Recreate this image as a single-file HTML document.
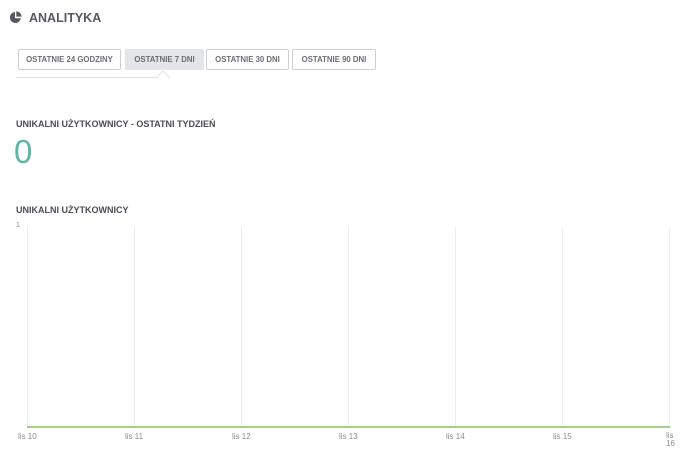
<!DOCTYPE html>
<html><head><meta charset="utf-8"><style>
body{margin:0;width:696px;height:455px;background:#fff;font-family:"Liberation Sans",sans-serif;position:relative;overflow:hidden;color:#4a4d55}
.a{position:absolute}
.tab{position:absolute;top:49px;height:19px;border:1px solid #cfcfd2;border-radius:2px;background:#fff;font-size:7.8px;font-weight:bold;color:#6b6e74;line-height:19px;text-align:center;box-sizing:content-box}
.vl{position:absolute;top:227px;width:1px;height:200px;background:#ececec}
.xl{position:absolute;top:432px;font-size:8px;color:#8a8d92}
</style></head><body>
<svg class="a" style="left:9px;top:11px" width="13" height="13" viewBox="0 0 13 13"><path d="M6 1A5.5 5.5 0 1 0 11.8 7.2H6Z" fill="#555860"/><path d="M7.3 0.2A5.5 5.5 0 0 1 12.6 5.6H7.3Z" fill="#555860"/></svg>
<div class="a" style="left:29px;top:11px;font-size:12.5px;font-weight:bold;color:#555860">ANALITYKA</div>
<div class="tab" style="left:18px;width:101px">OSTATNIE 24 GODZINY</div>
<div class="tab" style="left:125px;width:77px;background:#e4e5e8;border-color:#e4e5e8">OSTATNIE 7 DNI</div>
<div class="tab" style="left:206px;width:81px">OSTATNIE 30 DNI</div>
<div class="tab" style="left:292px;width:82px">OSTATNIE 90 DNI</div>
<div class="a" style="left:16px;top:77px;width:141px;height:1px;background:#e2e2e2"></div>
<svg class="a" style="left:155px;top:70px" width="16" height="9"><path d="M1 8L8 1L15 8" fill="#fff" stroke="#e2e2e2"/></svg>
<div class="a" style="left:16px;top:119px;font-size:9px;font-weight:bold;color:#4a4d55">UNIKALNI UŻYTKOWNICY - OSTATNI TYDZIEŃ</div>
<div class="a" style="left:14px;top:134px;font-size:33px;color:#5cb8a3;line-height:36px">0</div>
<div class="a" style="left:16px;top:205px;font-size:9px;font-weight:bold;color:#4a4d55">UNIKALNI UŻYTKOWNICY</div>
<div class="a" style="left:16px;top:222px;font-size:7px;color:#8a8d92">1</div>
<div class="vl" style="left:27px"></div><div class="vl" style="left:134px"></div><div class="vl" style="left:241px"></div><div class="vl" style="left:348px"></div><div class="vl" style="left:455px"></div><div class="vl" style="left:562px"></div><div class="vl" style="left:669px"></div>
<div class="a" style="left:27px;top:426px;width:643px;height:2px;background:#a7cf8c"></div>
<div class="xl" style="left:18px">lis 10</div><div class="xl" style="left:125px">lis 11</div><div class="xl" style="left:232px">lis 12</div><div class="xl" style="left:339px">lis 13</div><div class="xl" style="left:446px">lis 14</div><div class="xl" style="left:553px">lis 15</div>
<div class="xl" style="left:666px;line-height:8px">lis<br>16</div>
</body></html>
